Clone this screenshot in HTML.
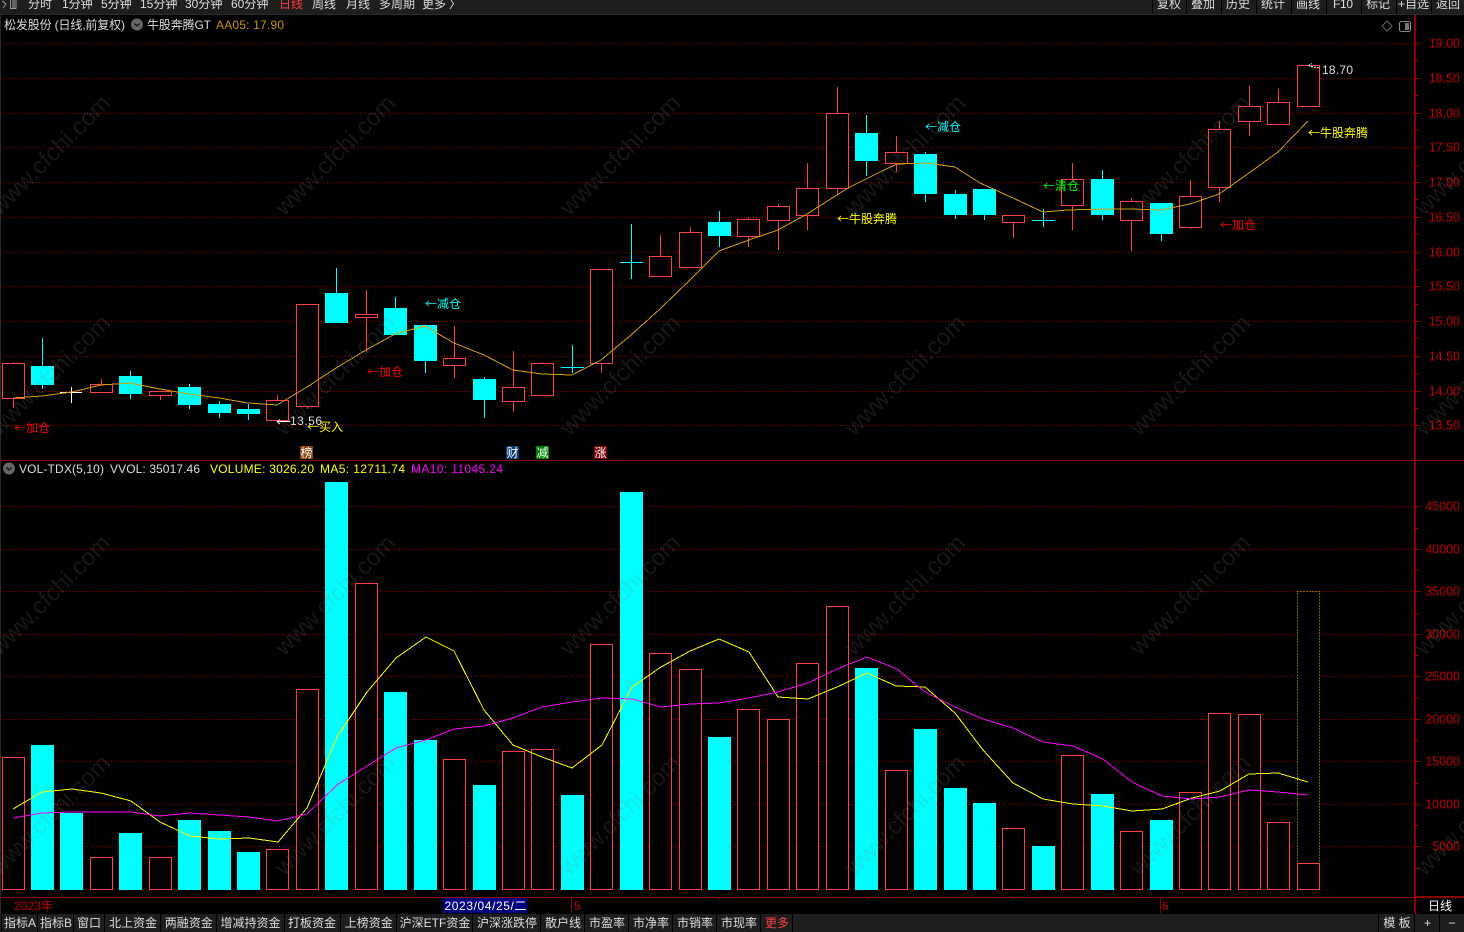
<!DOCTYPE html>
<html><head><meta charset="utf-8"><title>松发股份</title>
<style>
html,body{margin:0;padding:0;background:#000;width:1464px;height:932px;overflow:hidden}
svg{display:block;position:absolute;left:0;top:0}
text{font-family:"Liberation Sans","Noto Sans CJK SC",sans-serif;font-size:12px;fill:#ddd}
.ax text{font-size:12.5px;fill:#c00000;text-anchor:end}
.tab text{text-anchor:middle}
.wm text{font-size:24px;fill:rgba(128,128,128,.18);text-anchor:middle}
.lb{font-family:"Noto Sans CJK SC",sans-serif}
.r{fill:#000;stroke:#ff4040;stroke-width:1;shape-rendering:crispEdges}
.c{fill:#0ff;shape-rendering:crispEdges}
.grid{stroke:#a00000;stroke-width:1;stroke-dasharray:1 2;fill:none;shape-rendering:crispEdges}
.crisp{shape-rendering:crispEdges}
</style></head>
<body>
<svg width="1464" height="932" viewBox="0 0 1464 932" xmlns="http://www.w3.org/2000/svg">
<rect width="1464" height="932" fill="#000"/>

<!-- top bar -->
<rect x="0" y="0" width="1464" height="14" fill="#1e1e1e"/>
<path class="crisp" d="M0 14.5H1464" stroke="#2a2a2a"/>
<path class="crisp" d="M1152.5 0V14M1186.5 0V14M1221.5 0V14M1256.5 0V14M1291.5 0V14M1326.5 0V14M1361.5 0V14M1396.5 0V14M1431.5 0V14" stroke="#000"/>
<path d="M2 1L6 4L3 8M10.5 0V8.5H16V0" stroke="#999" fill="none"/>
<path class="crisp" d="M12 0H15V8H12Z" fill="#666"/>
<g>
<text x="28" y="8">分时</text><text x="62" y="8">1分钟</text><text x="101" y="8">5分钟</text>
<text x="140" y="8">15分钟</text><text x="185" y="8">30分钟</text><text x="231" y="8">60分钟</text>
<text x="279" y="8" style="fill:#ff3c3c">日线</text><text x="312" y="8">周线</text><text x="346" y="8">月线</text>
<text x="379" y="8">多周期</text><text x="422" y="8">更多</text><text x="449" y="8">〉</text>
<text x="1157" y="8">复权</text><text x="1191" y="8">叠加</text><text x="1226" y="8">历史</text>
<text x="1261" y="8">统计</text><text x="1296" y="8">画线</text><text x="1333" y="8" textLength="20">F10</text>
<text x="1366" y="8">标记</text><text x="1398" y="8">+自选</text><text x="1436" y="8">返回</text>
</g>

<!-- frame -->
<path class="crisp" d="M0.5 15V914" stroke="#2a2a2a"/>

<!-- price grid -->
<path class="grid" d="M3 43.5H1414M3 78.5H1414M3 113.5H1414M3 147.5H1414M3 182.5H1414M3 217.5H1414M3 252.5H1414M3 286.5H1414M3 321.5H1414M3 356.5H1414M3 391.5H1414M3 425.5H1414"/>
<!-- volume grid -->
<path class="grid" d="M3 506.5H1414M3 549.5H1414M3 591.5H1414M3 634.5H1414M3 676.5H1414M3 719.5H1414M3 761.5H1414M3 804.5H1414M3 846.5H1414"/>

<!-- candle wicks -->
<path class="crisp" fill="none" stroke="#ff4040" d="M13.5 362V408M101.5 379V393M160.5 391V400M277.5 395V420M307.5 304V409M366.5 290V352M454.5 326V378M513.5 351V412M542.5 362V396M601.5 269V373M660.5 235V277M690.5 227V267M748.5 217V247M778.5 204V250M807.5 163V230M837.5 87V195M896.5 136V172M1013.5 215V238M1072.5 163V230M1131.5 198V251M1190.5 180V229M1219.5 121V202M1249.5 86V136M1278.5 89V124M1308.5 65V107"/>
<path class="crisp" fill="none" stroke="#0ff" d="M42.5 338V389M130.5 371V399M189.5 384V409M219.5 401V418M248.5 404V420M336.5 268V323M395.5 297V335M425.5 325V373M484.5 377V418M572.5 345V373M631.5 224V279M719.5 211V247M866.5 115V176M925.5 152V202M955.5 190V219M984.5 189V220M1043.5 209V227M1102.5 170V220M1161.5 203V241"/>
<path class="crisp" fill="none" stroke="#fff" d="M71.5 387V403M60 392.5H82"/>

<!-- red candle bodies -->
<g class="r">
<rect x="2.5" y="363.5" width="22" height="35"/>
<rect x="90.5" y="384.5" width="22" height="8"/>
<rect x="149.5" y="391.5" width="22" height="4"/>
<rect x="266.5" y="400.5" width="22" height="20"/>
<rect x="296.5" y="304.5" width="22" height="102"/>
<rect x="355.5" y="314.5" width="22" height="3"/>
<rect x="443.5" y="358.5" width="22" height="7"/>
<rect x="502.5" y="387.5" width="22" height="14"/>
<rect x="531.5" y="363.5" width="22" height="32"/>
<rect x="590.5" y="269.5" width="22" height="94"/>
<rect x="649.5" y="256.5" width="22" height="20"/>
<rect x="679.5" y="232.5" width="22" height="35"/>
<rect x="737.5" y="219.5" width="22" height="17"/>
<rect x="767.5" y="206.5" width="22" height="14"/>
<rect x="796.5" y="188.5" width="22" height="27"/>
<rect x="826.5" y="113.5" width="22" height="75"/>
<rect x="885.5" y="152.5" width="22" height="11"/>
<rect x="1002.5" y="215.5" width="22" height="7"/>
<rect x="1061.5" y="179.5" width="22" height="26"/>
<rect x="1120.5" y="201.5" width="22" height="19"/>
<rect x="1179.5" y="196.5" width="22" height="31"/>
<rect x="1208.5" y="129.5" width="22" height="58"/>
<rect x="1238.5" y="106.5" width="22" height="15"/>
<rect x="1267.5" y="102.5" width="22" height="22"/>
<rect x="1297.5" y="65.5" width="22" height="41"/>
</g>
<!-- cyan candle bodies -->
<g class="c">
<rect x="31" y="366" width="23" height="19"/>
<rect x="119" y="376" width="23" height="18"/>
<rect x="178" y="387" width="23" height="18"/>
<rect x="208" y="404" width="23" height="9"/>
<rect x="237" y="409" width="23" height="5"/>
<rect x="325" y="293" width="23" height="30"/>
<rect x="384" y="308" width="23" height="27"/>
<rect x="414" y="325" width="23" height="36"/>
<rect x="473" y="379" width="23" height="21"/>
<rect x="561" y="367" width="23" height="1"/>
<rect x="620" y="262" width="23" height="1"/>
<rect x="708" y="222" width="23" height="14"/>
<rect x="855" y="133" width="23" height="28"/>
<rect x="914" y="154" width="23" height="40"/>
<rect x="944" y="194" width="23" height="21"/>
<rect x="973" y="189" width="23" height="26"/>
<rect x="1032" y="220" width="23" height="1"/>
<rect x="1091" y="179" width="23" height="36"/>
<rect x="1150" y="203" width="23" height="31"/>
</g>

<!-- price MA line -->
<polyline fill="none" stroke="#d4a000" stroke-width="1" shape-rendering="crispEdges" points="13,398 42,396 72,392 101,385 130,383 160,389 189,394 219,398 248,403 277,405 307,387 336,368 366,350 395,334 425,326 454,343 484,355 513,370 542,374 572,375 601,360 631,335 660,309 690,280 719,251 749,240 778,230 807,214 837,195 848,188 880,172 897,164 927,163 955,167 980,183 1013,198 1043,212 1067,210 1107,209 1131,209 1161,210 1190,204 1219,194 1249,173 1278,152 1308,121"/>

<!-- price labels -->
<text class="lb" x="14" y="432" style="fill:#f00">←加仓</text>
<text class="lb" x="425" y="308" style="fill:#0ff">←减仓</text>
<text class="lb" x="367" y="376" style="fill:#f00">←加仓</text>
<text class="lb" x="307" y="431" style="fill:#ff0">←买入</text>
<text class="lb" x="837" y="223" style="fill:#ff0">←牛股奔腾</text>
<text class="lb" x="925" y="131" style="fill:#0ff">←减仓</text>
<text class="lb" x="1043" y="190" style="fill:#0f0">←清仓</text>
<text class="lb" x="1220" y="229" style="fill:#f00">←加仓</text>
<text class="lb" x="1308" y="137" style="fill:#ff0">←牛股奔腾</text>
<text x="290" y="425" textLength="32">13.56</text>
<text x="1322" y="74" textLength="31">18.70</text>
<path d="M277 421.500H290M277 421.500L280 419.500M277 421.500L280 424" stroke="#fff" fill="none"/>
<path d="M1308.500 65.500L1312 63.500M1308.500 65.500L1311 66.500M1311 66.500L1320 68" stroke="#fff" fill="none" stroke-dasharray="2 1"/>

<!-- badges -->
<rect x="300" y="446" width="13" height="13" fill="#8b4513"/><text x="300.500" y="457" style="fill:#fff">榜</text>
<rect x="506" y="446" width="13" height="13" fill="#0a3a70"/><text x="506.500" y="457" style="fill:#fff">财</text>
<rect x="536" y="446" width="13" height="13" fill="#008000"/><text x="536.500" y="457" style="fill:#fff">减</text>
<rect x="594" y="446" width="13" height="13" fill="#800000"/><text x="594.500" y="457" style="fill:#fff">涨</text>

<!-- legends -->
<text x="4" y="29" textLength="121">松发股份 (日线,前复权)</text>
<circle cx="137" cy="24.500" r="6" fill="#666"/><path d="M134.500 23.500L137 26L139.500 23.500" stroke="#111" stroke-width="1.300" fill="none"/>
<text x="147" y="29" textLength="64">牛股奔腾GT</text>
<text x="216" y="29" textLength="68" style="fill:#c89600">AA05: 17.90</text>
<path d="M1387 21L1392 26L1387 31L1382 26Z" fill="none" stroke="#666"/>
<rect x="1399.500" y="21.500" width="11" height="10" rx="2" fill="none" stroke="#888"/><rect x="1405" y="23" width="4" height="7" fill="#777"/>

<!-- pane separator -->
<rect x="0" y="460" width="1464" height="1" fill="#800000"/>

<circle cx="9" cy="468.500" r="6" fill="#666"/><path d="M6.500 467.500L9 470L11.500 467.500" stroke="#111" stroke-width="1.300" fill="none"/>
<text x="19" y="473" textLength="85">VOL-TDX(5,10)</text>
<text x="110" y="473" textLength="90">VVOL: 35017.46</text>
<text x="210" y="473" textLength="104" style="fill:#ff0">VOLUME: 3026.20</text>
<text x="320" y="473" textLength="85" style="fill:#ff0">MA5: 12711.74</text>
<text x="411" y="473" textLength="92" style="fill:#f0f">MA10: 11045.24</text>

<!-- volume bars -->
<g class="r">
<rect x="2.5" y="757.5" width="22" height="132"/>
<rect x="90.5" y="857.5" width="22" height="32"/>
<rect x="149.5" y="857.5" width="22" height="32"/>
<rect x="266.5" y="849.5" width="22" height="40"/>
<rect x="296.5" y="689.5" width="22" height="200"/>
<rect x="355.5" y="583.5" width="22" height="306"/>
<rect x="443.5" y="759.5" width="22" height="130"/>
<rect x="502.5" y="751.5" width="22" height="138"/>
<rect x="531.5" y="749.5" width="22" height="140"/>
<rect x="590.5" y="644.5" width="22" height="245"/>
<rect x="649.5" y="653.5" width="22" height="236"/>
<rect x="679.5" y="669.5" width="22" height="220"/>
<rect x="737.5" y="709.5" width="22" height="180"/>
<rect x="767.5" y="719.5" width="22" height="170"/>
<rect x="796.5" y="663.5" width="22" height="226"/>
<rect x="826.5" y="606.5" width="22" height="283"/>
<rect x="885.5" y="770.5" width="22" height="119"/>
<rect x="1002.5" y="828.5" width="22" height="61"/>
<rect x="1061.5" y="755.5" width="22" height="134"/>
<rect x="1120.5" y="831.5" width="22" height="58"/>
<rect x="1179.5" y="792.5" width="22" height="97"/>
<rect x="1208.5" y="713.5" width="22" height="176"/>
<rect x="1238.5" y="714.5" width="22" height="175"/>
<rect x="1267.5" y="822.5" width="22" height="67"/>
</g>
<rect x="1297.5" y="591.5" width="22" height="272" fill="#000" stroke="#cccc00" stroke-dasharray="1 2" class="crisp"/>
<rect x="1297.5" y="863.5" width="22" height="26" class="r"/>
<g class="c">
<rect x="31" y="745" width="23" height="145"/>
<rect x="60" y="813" width="23" height="77"/>
<rect x="119" y="833" width="23" height="57"/>
<rect x="178" y="820" width="23" height="70"/>
<rect x="208" y="831" width="23" height="59"/>
<rect x="237" y="852" width="23" height="38"/>
<rect x="325" y="482" width="23" height="408"/>
<rect x="384" y="692" width="23" height="198"/>
<rect x="414" y="740" width="23" height="150"/>
<rect x="473" y="785" width="23" height="105"/>
<rect x="561" y="795" width="23" height="95"/>
<rect x="620" y="492" width="23" height="398"/>
<rect x="708" y="737" width="23" height="153"/>
<rect x="855" y="668" width="23" height="222"/>
<rect x="914" y="729" width="23" height="161"/>
<rect x="944" y="788" width="23" height="102"/>
<rect x="973" y="803" width="23" height="87"/>
<rect x="1032" y="846" width="23" height="44"/>
<rect x="1091" y="794" width="23" height="96"/>
<rect x="1150" y="820" width="23" height="70"/>
</g>
<polyline fill="none" stroke="#ff0" stroke-width="1" shape-rendering="crispEdges" points="13,809 42,792 72,789 101,793 131,801 160,822 190,836 219,839 249,838 278,842 307,808 337,737 367,692 396,658 426,637 454,651 484,710 513,745 542,757 572,768 602,745 632,687 661,667 690,651 719,639 749,652 778,697 808,699 837,687 867,673 896,686 925,687 955,713 983,750 1013,783 1043,799 1073,804 1103,806 1132,811 1162,809 1192,798 1220,791 1249,774 1278,773 1308,782"/>
<polyline fill="none" stroke="#f0f" stroke-width="1" shape-rendering="crispEdges" points="13,818 42,813 72,812 101,812 131,812 160,816 190,813 219,815 249,817 278,821 307,814 337,785 367,766 396,748 426,740 454,729 484,726 513,718 542,707 572,702 602,698 632,699 661,707 690,704 719,703 749,698 778,692 808,683 837,669 867,657 897,669 925,692 955,707 983,719 1013,728 1043,742 1073,746 1103,759 1132,782 1162,796 1192,799 1220,797 1249,790 1278,792 1308,795"/>

<!-- axis -->
<rect x="1414" y="15" width="2" height="899" fill="#8b0000"/>
<path class="crisp" stroke="#8b0000" fill="none" d="M1416 43.5H1421M1416 78.5H1421M1416 113.5H1421M1416 147.5H1421M1416 182.5H1421M1416 217.5H1421M1416 252.5H1421M1416 286.5H1421M1416 321.5H1421M1416 356.5H1421M1416 391.5H1421M1416 425.5H1421M1416 60.5H1419M1416 95.5H1419M1416 130.5H1419M1416 165.5H1419M1416 199.5H1419M1416 234.5H1419M1416 269.5H1419M1416 304.5H1419M1416 338.5H1419M1416 373.5H1419M1416 408.5H1419M1416 506.5H1421M1416 549.5H1421M1416 591.5H1421M1416 634.5H1421M1416 676.5H1421M1416 719.5H1421M1416 761.5H1421M1416 804.5H1421M1416 846.5H1421M1416 528.5H1419M1416 570.5H1419M1416 613.5H1419M1416 655.5H1419M1416 698.5H1419M1416 740.5H1419M1416 783.5H1419M1416 825.5H1419M1416 868.5H1419"/>
<g class="ax">
<text x="1460" y="47.5">19.00</text><text x="1460" y="82.5">18.50</text><text x="1460" y="117.5">18.00</text>
<text x="1460" y="151.5">17.50</text><text x="1460" y="186.5">17.00</text><text x="1460" y="221.5">16.50</text>
<text x="1460" y="256.5">16.00</text><text x="1460" y="290.5">15.50</text><text x="1460" y="325.5">15.00</text>
<text x="1460" y="360.5">14.50</text><text x="1460" y="395.5">14.00</text><text x="1460" y="429.5">13.50</text>
<text x="1460" y="510.5">45000</text><text x="1460" y="553.5">40000</text><text x="1460" y="595.5">35000</text>
<text x="1460" y="638.5">30000</text><text x="1460" y="680.5">25000</text><text x="1460" y="723.5">20000</text>
<text x="1460" y="765.5">15000</text><text x="1460" y="808.5">10000</text><text x="1460" y="850.5">5000</text>
</g>

<!-- time axis -->
<rect x="0" y="897" width="1414" height="1" fill="#8b0000"/>
<rect x="1416" y="896" width="48" height="2" fill="#8b0000"/>
<path class="crisp" stroke="#8b0000" fill="none" d="M571.5 898V913M1160.5 898V913M718.5 898V900M867.5 898V900M1013.5 898V900"/>
<text x="14" y="910" textLength="39" style="fill:#c00000">2023年</text>
<rect x="443" y="898" width="84" height="15" fill="#000080"/>
<text x="444.5" y="910" textLength="82" style="fill:#fff">2023/04/25/二</text>
<text x="574" y="910" style="fill:#c00000">5</text>
<text x="1162" y="910" style="fill:#c00000">6</text>
<text x="1428" y="910" style="fill:#fff">日线</text>

<!-- bottom bar -->
<rect x="0" y="914" width="1464" height="18" fill="#1e1e1e"/>
<path class="crisp" stroke="#000" fill="none" d="M1.5 914V932M37.5 914V932M73.5 914V932M104.5 914V932M160.5 914V932M216.5 914V932M284.5 914V932M340.5 914V932M396.5 914V932M472.5 914V932M540.5 914V932M584.5 914V932M628.5 914V932M672.5 914V932M716.5 914V932M760.5 914V932M792.5 914V932M1378.5 914V932M1414.5 914V932M1439.5 914V932"/>
<g class="tab">
<text x="20" y="927">指标A</text><text x="56" y="927">指标B</text><text x="89" y="927">窗口</text>
<text x="133" y="927">北上资金</text><text x="188.7" y="927">两融资金</text><text x="250.5" y="927">增减持资金</text>
<text x="312" y="927">打板资金</text><text x="368.7" y="927">上榜资金</text><text x="435" y="927">沪深ETF资金</text>
<text x="507" y="927">沪深涨跌停</text><text x="563" y="927">散户线</text><text x="607" y="927">市盈率</text>
<text x="651" y="927">市净率</text><text x="695" y="927">市销率</text><text x="739" y="927">市现率</text>
<text x="777" y="927" style="fill:#ff4040">更多</text>
<text x="1397" y="927">模 板</text><text x="1427.5" y="927">+</text><text x="1452" y="927">−</text>
</g>

<!-- watermark -->
<g class="wm">
<text transform="translate(50,155) rotate(-45)" dy="8">www.cfchi.com</text>
<text transform="translate(335,155) rotate(-45)" dy="8">www.cfchi.com</text>
<text transform="translate(620,155) rotate(-45)" dy="8">www.cfchi.com</text>
<text transform="translate(905,155) rotate(-45)" dy="8">www.cfchi.com</text>
<text transform="translate(1190,155) rotate(-45)" dy="8">www.cfchi.com</text>
<text transform="translate(1475,155) rotate(-45)" dy="8">www.cfchi.com</text>
<text transform="translate(50,375) rotate(-45)" dy="8">www.cfchi.com</text>
<text transform="translate(335,375) rotate(-45)" dy="8">www.cfchi.com</text>
<text transform="translate(620,375) rotate(-45)" dy="8">www.cfchi.com</text>
<text transform="translate(905,375) rotate(-45)" dy="8">www.cfchi.com</text>
<text transform="translate(1190,375) rotate(-45)" dy="8">www.cfchi.com</text>
<text transform="translate(1475,375) rotate(-45)" dy="8">www.cfchi.com</text>
<text transform="translate(50,595) rotate(-45)" dy="8">www.cfchi.com</text>
<text transform="translate(335,595) rotate(-45)" dy="8">www.cfchi.com</text>
<text transform="translate(620,595) rotate(-45)" dy="8">www.cfchi.com</text>
<text transform="translate(905,595) rotate(-45)" dy="8">www.cfchi.com</text>
<text transform="translate(1190,595) rotate(-45)" dy="8">www.cfchi.com</text>
<text transform="translate(1475,595) rotate(-45)" dy="8">www.cfchi.com</text>
<text transform="translate(50,815) rotate(-45)" dy="8">www.cfchi.com</text>
<text transform="translate(335,815) rotate(-45)" dy="8">www.cfchi.com</text>
<text transform="translate(620,815) rotate(-45)" dy="8">www.cfchi.com</text>
<text transform="translate(905,815) rotate(-45)" dy="8">www.cfchi.com</text>
<text transform="translate(1190,815) rotate(-45)" dy="8">www.cfchi.com</text>
<text transform="translate(1475,815) rotate(-45)" dy="8">www.cfchi.com</text>
</g>
</svg>
</body></html>
